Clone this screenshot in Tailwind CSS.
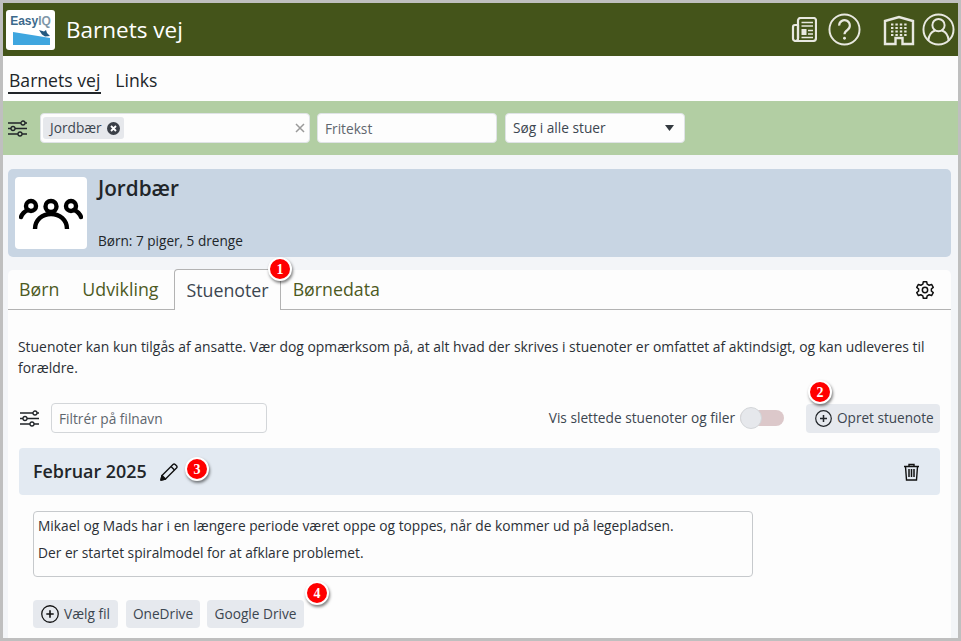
<!DOCTYPE html>
<html lang="da">
<head>
  <title>Barnets vej</title>
  <meta charset="UTF-8">
  <meta name="viewport" content="width=device-width, initial-scale=1">
  <script src="https://cdn.jsdelivr.net/npm/@tailwindcss/browser@4"></script>
</head>
<body class="w-[961px] h-[641px] overflow-hidden font-['Open_Sans',sans-serif] text-[#212529]">
<div class="h-full border-[3px] border-[#bfbfbf] bg-[#f3f5f8] overflow-hidden flex flex-col">

  <!-- header -->
  <header class="h-[53px] shrink-0 bg-[#44541a] flex items-center pl-[3px] pr-[3px] text-white">
    <div class="w-[49px] h-[40px] bg-white rounded-[3px] flex flex-col items-center pt-[5px]">
      <span class="text-[12px] leading-[12px] font-bold text-[#3c6a8c] font-['Liberation_Sans',sans-serif]">Easy<span class="text-[#7f97a8]">IQ</span></span>
      <svg class="mt-[2px] ml-[1px]" width="39" height="18" viewBox="0 0 39 18"><path d="M1 3 L26 7 L38 9 V16 H1Z" fill="#3fa6df"/><path d="M27 1 l5 1.500 l2 -1.500 l1 3 l3 3 l-5 .5 l-3 -2z" fill="#23597f"/></svg>
    </div>
    <h1 class="ml-[11px] pt-[1px] text-[22.500px] leading-none">Barnets vej</h1>
    <div class="ml-auto flex items-center text-[#e8e8e0]">
      <svg class="w-[26px] h-[25px] mr-[11px]" viewBox="0 0 26 25" fill="none" stroke="currentColor" stroke-width="2.200"><path d="M7 8V21.500a2.500 2.500 0 0 1-5 0V10a2 2 0 0 1 2-2H7"/><path d="M4.500 24H22a3 3 0 0 0 3-3V3.500A2.500 2.500 0 0 0 22.500 1H9.500A2.500 2.500 0 0 0 7 3.500V21"/><path d="M10.500 5.500H22M10.500 9H22M17 13.500H22M17 17H22M10.500 20.500H22" stroke-width="1.700"/><rect x="10.500" y="12" width="5" height="6" fill="currentColor" stroke="none"/></svg>
      <svg class="w-[33px] h-[33px]" viewBox="0 0 34 34" fill="none" stroke="currentColor" stroke-width="2"><circle cx="17" cy="17" r="15.500"/><path d="M11.500 13a5.500 5.500 0 1 1 8.500 4.500c-2 1.300-3 2.300-3 4.500" stroke-width="2.200"/><circle cx="17" cy="26" r="1.500" fill="currentColor" stroke="none"/></svg>
      <svg class="w-[32px] h-[32px] ml-[22px]" viewBox="0 0 32 32" fill="none" stroke="currentColor" stroke-width="2.400"><path d="M2 30V7L16 3 30 7V30H19.500V24H12.500V30Z"/><path d="M8 10.500h16M8 14h16M8 17.500h16M8 21h16" stroke-width="2" stroke-dasharray="2.400 2"/></svg>
      <svg class="w-[33px] h-[33px] ml-[7px]" viewBox="0 0 34 34" fill="none" stroke="currentColor" stroke-width="2"><circle cx="17" cy="17" r="15.500"/><circle cx="17" cy="12.500" r="6.300"/><path d="M6.500 28.500c.5-6 4-9.500 7-10.500M27.500 28.500c-.5-6-4-9.500-7-10.500"/></svg>
    </div>
  </header>

  <!-- nav -->
  <nav class="h-[45px] shrink-0 bg-[#fdfdfd] flex items-start pl-[5px] pt-[12px] text-[17.600px] leading-[24px]">
    <a class="border-b-2 border-[#212529] px-[1px]">Barnets vej</a>
    <a class="ml-[14px]">Links</a>
  </nav>

  <!-- filter bar -->
  <div class="h-[54px] shrink-0 bg-[#b2cea3] flex items-center pl-[5px]">
    <svg class="w-[19px] h-[17px] mr-[13px]" viewBox="0 0 19 17" fill="none" stroke="#212529" stroke-width="1.300"><path d="M0 3H13M17 3H19M0 8.500H3M7 8.500H19M0 14H10M14 14H19"/><circle cx="15" cy="3" r="2"/><circle cx="5" cy="8.500" r="2"/><circle cx="12" cy="14" r="2"/></svg>
    <div class="w-[270px] h-[30px] bg-[#fdfdfd] rounded-[4px] border border-[#dfe3e6] flex items-center px-[2px]">
      <span class="h-[22px] bg-[#e6e8ec] rounded-[3px] flex items-center pl-[7px] pr-[4px] text-[13.700px] text-[#3c4650]">Jordbær
        <svg class="w-[13px] h-[13px] ml-[5px]" viewBox="0 0 13 13"><circle cx="6.500" cy="6.500" r="6.500" fill="#3a3f47"/><path d="M4 4l5 5M9 4l-5 5" stroke="#fff" stroke-width="1.800"/></svg>
      </span>
      <svg class="ml-auto mr-[2px] w-[10px] h-[10px]" viewBox="0 0 10 10"><path d="M1 1l8 8M9 1l-8 8" stroke="#9a9a9a" stroke-width="1.500"/></svg>
    </div>
    <input class="ml-[7px] w-[180px] h-[30px] bg-[#fdfdfd] rounded-[4px] border border-[#dfe3e6] px-[7px] text-[13.700px] placeholder:text-[#5f666d]" placeholder="Fritekst">
    <div class="ml-[8px] w-[180px] h-[30px] bg-[#fdfdfd] rounded-[4px] border border-[#dfe3e6] flex items-center justify-between pl-[7px] pr-[10px] text-[13.700px] text-[#3c4650]">
      Søg i alle stuer
      <svg width="9" height="6" viewBox="0 0 9 6"><path d="M0 0H9L4.500 6Z" fill="#343a40"/></svg>
    </div>
  </div>

  <!-- content -->
  <main class="flex-1 min-h-0 flex flex-col pl-[5px] pr-[7px] pt-[14px] overflow-hidden">
    <section class="h-[88px] shrink-0 bg-[#c8d5e3] rounded-[5px] flex p-[8px] pl-[7px]">
      <div class="w-[72px] h-[72px] bg-white rounded-[4px] flex items-center justify-center">
        <svg width="64" height="36" viewBox="0 0 64 36" fill="none" stroke="#000" stroke-width="4.400" stroke-linecap="round"><circle cx="12" cy="11" r="5"/><circle cx="32" cy="11.500" r="5.500"/><circle cx="52" cy="11" r="5"/><path d="M2 22c1-3 3.500-5.500 7-7M62 22c-1-3-3.500-5.500-7-7"/><path d="M16 34c0-9 7-15 16-15s16 6 16 15" stroke-linecap="butt"/></svg>
      </div>
      <div class="ml-[11px] flex flex-col justify-between">
        <h2 class="text-[20.700px] leading-[24px] font-semibold mt-[-1px]">Jordbær</h2>
        <p class="text-[13.600px] leading-[18px] mb-[-1px]">Børn: 7 piger, 5 drenge</p>
      </div>
    </section>

    <section class="flex-1 mt-[13px] bg-[#fdfdfd] rounded-t-[5px] relative">
      <div class="h-[40px] border-b border-[#b3b3b3] flex items-end text-[17.800px] leading-[24px] pr-[16px] text-[#4d5a1f]">
        <a class="pl-[11px] pr-[11px] h-[40px] pt-[8px]">Børn</a>
        <a class="pl-[12px] pr-[16px] h-[40px] pt-[8px]">Udvikling</a>
        <a class="px-[11px] pt-[8px] bg-[#fdfdfd] text-[#3c4650] border border-b-0 border-[#b3b3b3] rounded-t-[4px] mb-[-1px] h-[41px]">Stuenoter</a>
        <a class="px-[12px] h-[40px] pt-[8px]">Børnedata</a>
        <svg class="ml-auto mb-[9px] w-[20px] h-[20px]" viewBox="0 0 24 24" fill="none" stroke="#111" stroke-width="1.800" stroke-linejoin="round"><circle cx="12" cy="12" r="3.200"/><path d="M10 2h4l.6 3 2.400 1.300 2.900-1 2 3.500-2.300 2a8 8 0 0 1 0 2.400l2.300 2-2 3.500-2.900-1L14.600 19 14 22h-4l-.6-3-2.400-1.300-2.900 1-2-3.500 2.300-2a8 8 0 0 1 0-2.400l-2.300-2 2-3.500 2.900 1L9.400 5Z"/></svg>
      </div>

      <p class="px-[10px] mt-[26px] text-[13.900px] leading-[21px] text-[#2b3036]">Stuenoter kan kun tilgås af ansatte. Vær dog opmærksom på, at alt hvad der skrives i stuenoter er omfattet af aktindsigt, og kan udleveres til forældre.</p>

      <div class="mt-[25px] mx-[11px] h-[30px] flex items-center">
        <svg class="w-[19px] h-[17px] ml-[1px]" viewBox="0 0 19 17" fill="none" stroke="#212529" stroke-width="1.300"><path d="M0 3H13M17 3H19M0 8.500H3M7 8.500H19M0 14H10M14 14H19"/><circle cx="15" cy="3" r="2"/><circle cx="5" cy="8.500" r="2"/><circle cx="12" cy="14" r="2"/></svg>
        <input class="w-[216px] h-[30px] ml-[12px] bg-[#fdfdfd] rounded-[4px] border border-[#d3d6d9] px-[7px] text-[13.700px] placeholder:text-[#5f666d]" placeholder="Filtrér på filnavn">
        <span class="ml-auto text-[13.700px] text-[#3c4650]">Vis slettede stuenoter og filer</span>
        <span class="ml-[5px] w-[44px] h-[16px] rounded-full bg-[#dcc8ca] relative">
          <span class="absolute left-0 top-[-3px] w-[22px] h-[22px] rounded-full bg-[#e6e8ec] border border-[#d3d6d9]"></span>
        </span>
        <button class="ml-[22px] h-[29px] w-[134px] bg-[#e6e9ee] rounded-[4px] flex items-center pl-[9px] text-[13.600px] text-[#3c4650]">
          <svg class="w-[17px] h-[17px] mr-[5px]" viewBox="0 0 17 17" fill="none" stroke="#212529"><circle cx="8.500" cy="8.500" r="7.800" stroke-width="1.200"/><path d="M8.500 5v7M5 8.500h7" stroke-width="1.500"/></svg>
          Opret stuenote
        </button>
      </div>

      <div class="mt-[15px] mx-[11px] h-[47px] bg-[#e3eaf2] rounded-[4px] flex items-center pl-[14px] pr-[20px]">
        <span class="text-[17.900px] font-semibold">Februar 2025</span>
        <svg class="ml-[13px] w-[18px] h-[18px]" viewBox="0 0 18 18" fill="none" stroke="#111" stroke-width="1.400" stroke-linejoin="round"><path d="M1 17l1-4.500L13 1.500a1.600 1.600 0 0 1 2.200 0l1.300 1.300a1.600 1.600 0 0 1 0 2.200L5.500 16Z"/><path d="M11 3.500l3.500 3.500"/><path d="M1 17l1-4.500L5.500 16Z" fill="#111"/></svg>
        <svg class="ml-auto w-[17px] h-[18px]" viewBox="0 0 17 18" fill="none" stroke="#111" stroke-width="1.400"><path d="M1 3.500H16M6 3.500V1.500H11V3.500"/><path d="M2.500 3.500L3.500 17H13.500L14.500 3.500"/><path d="M6 6v8M8.500 6v8M11 6v8" stroke-width="1.500"/></svg>
      </div>

      <div class="mt-[16px] ml-[25px] w-[720px] h-[66px] border border-[#c6c9cc] rounded-[4px] px-[4px] pt-[4px] text-[13.750px] leading-[19px] text-[#2b3036]">
        <p class="mb-[8px]">Mikael og Mads har i en længere periode været oppe og toppes, når de kommer ud på legepladsen.</p>
        <p>Der er startet spiralmodel for at afklare problemet.</p>
      </div>

      <div class="mt-[23px] ml-[25px] flex text-[13.700px] text-[#3c4650]">
        <button class="h-[28px] w-[85px] bg-[#e6e9ee] rounded-[4px] flex items-center pl-[8px]">
          <svg class="w-[18px] h-[18px] mr-[5px]" viewBox="0 0 17 17" fill="none" stroke="#111"><circle cx="8.500" cy="8.500" r="7.800" stroke-width="1.200"/><path d="M8.500 5v7M5 8.500h7" stroke-width="1.500"/></svg>
          Vælg fil
        </button>
        <button class="ml-[8px] h-[28px] w-[74px] bg-[#e6e9ee] rounded-[4px]">OneDrive</button>
        <button class="ml-[7px] h-[28px] w-[97px] bg-[#e6e9ee] rounded-[4px]">Google Drive</button>
      </div>

      <!-- callout badges -->
      <span class="absolute left-[260px] top-[-13px] w-[24px] h-[24px] rounded-full bg-[#f00] border-2 border-white shadow-[1px_2px_3px_rgba(0,0,0,0.5)] flex items-center justify-center text-white text-[14px] font-bold font-['Liberation_Serif',serif]">1</span>
      <span class="absolute left-[800px] top-[110px] w-[24px] h-[24px] rounded-full bg-[#f00] border-2 border-white shadow-[1px_2px_3px_rgba(0,0,0,0.5)] flex items-center justify-center text-white text-[14px] font-bold font-['Liberation_Serif',serif]">2</span>
      <span class="absolute left-[177px] top-[187px] w-[24px] h-[24px] rounded-full bg-[#f00] border-2 border-white shadow-[1px_2px_3px_rgba(0,0,0,0.5)] flex items-center justify-center text-white text-[14px] font-bold font-['Liberation_Serif',serif]">3</span>
      <span class="absolute left-[297px] top-[311px] w-[24px] h-[24px] rounded-full bg-[#f00] border-2 border-white shadow-[1px_2px_3px_rgba(0,0,0,0.5)] flex items-center justify-center text-white text-[14px] font-bold font-['Liberation_Serif',serif]">4</span>
    </section>
  </main>
</div>
</body>
</html>
